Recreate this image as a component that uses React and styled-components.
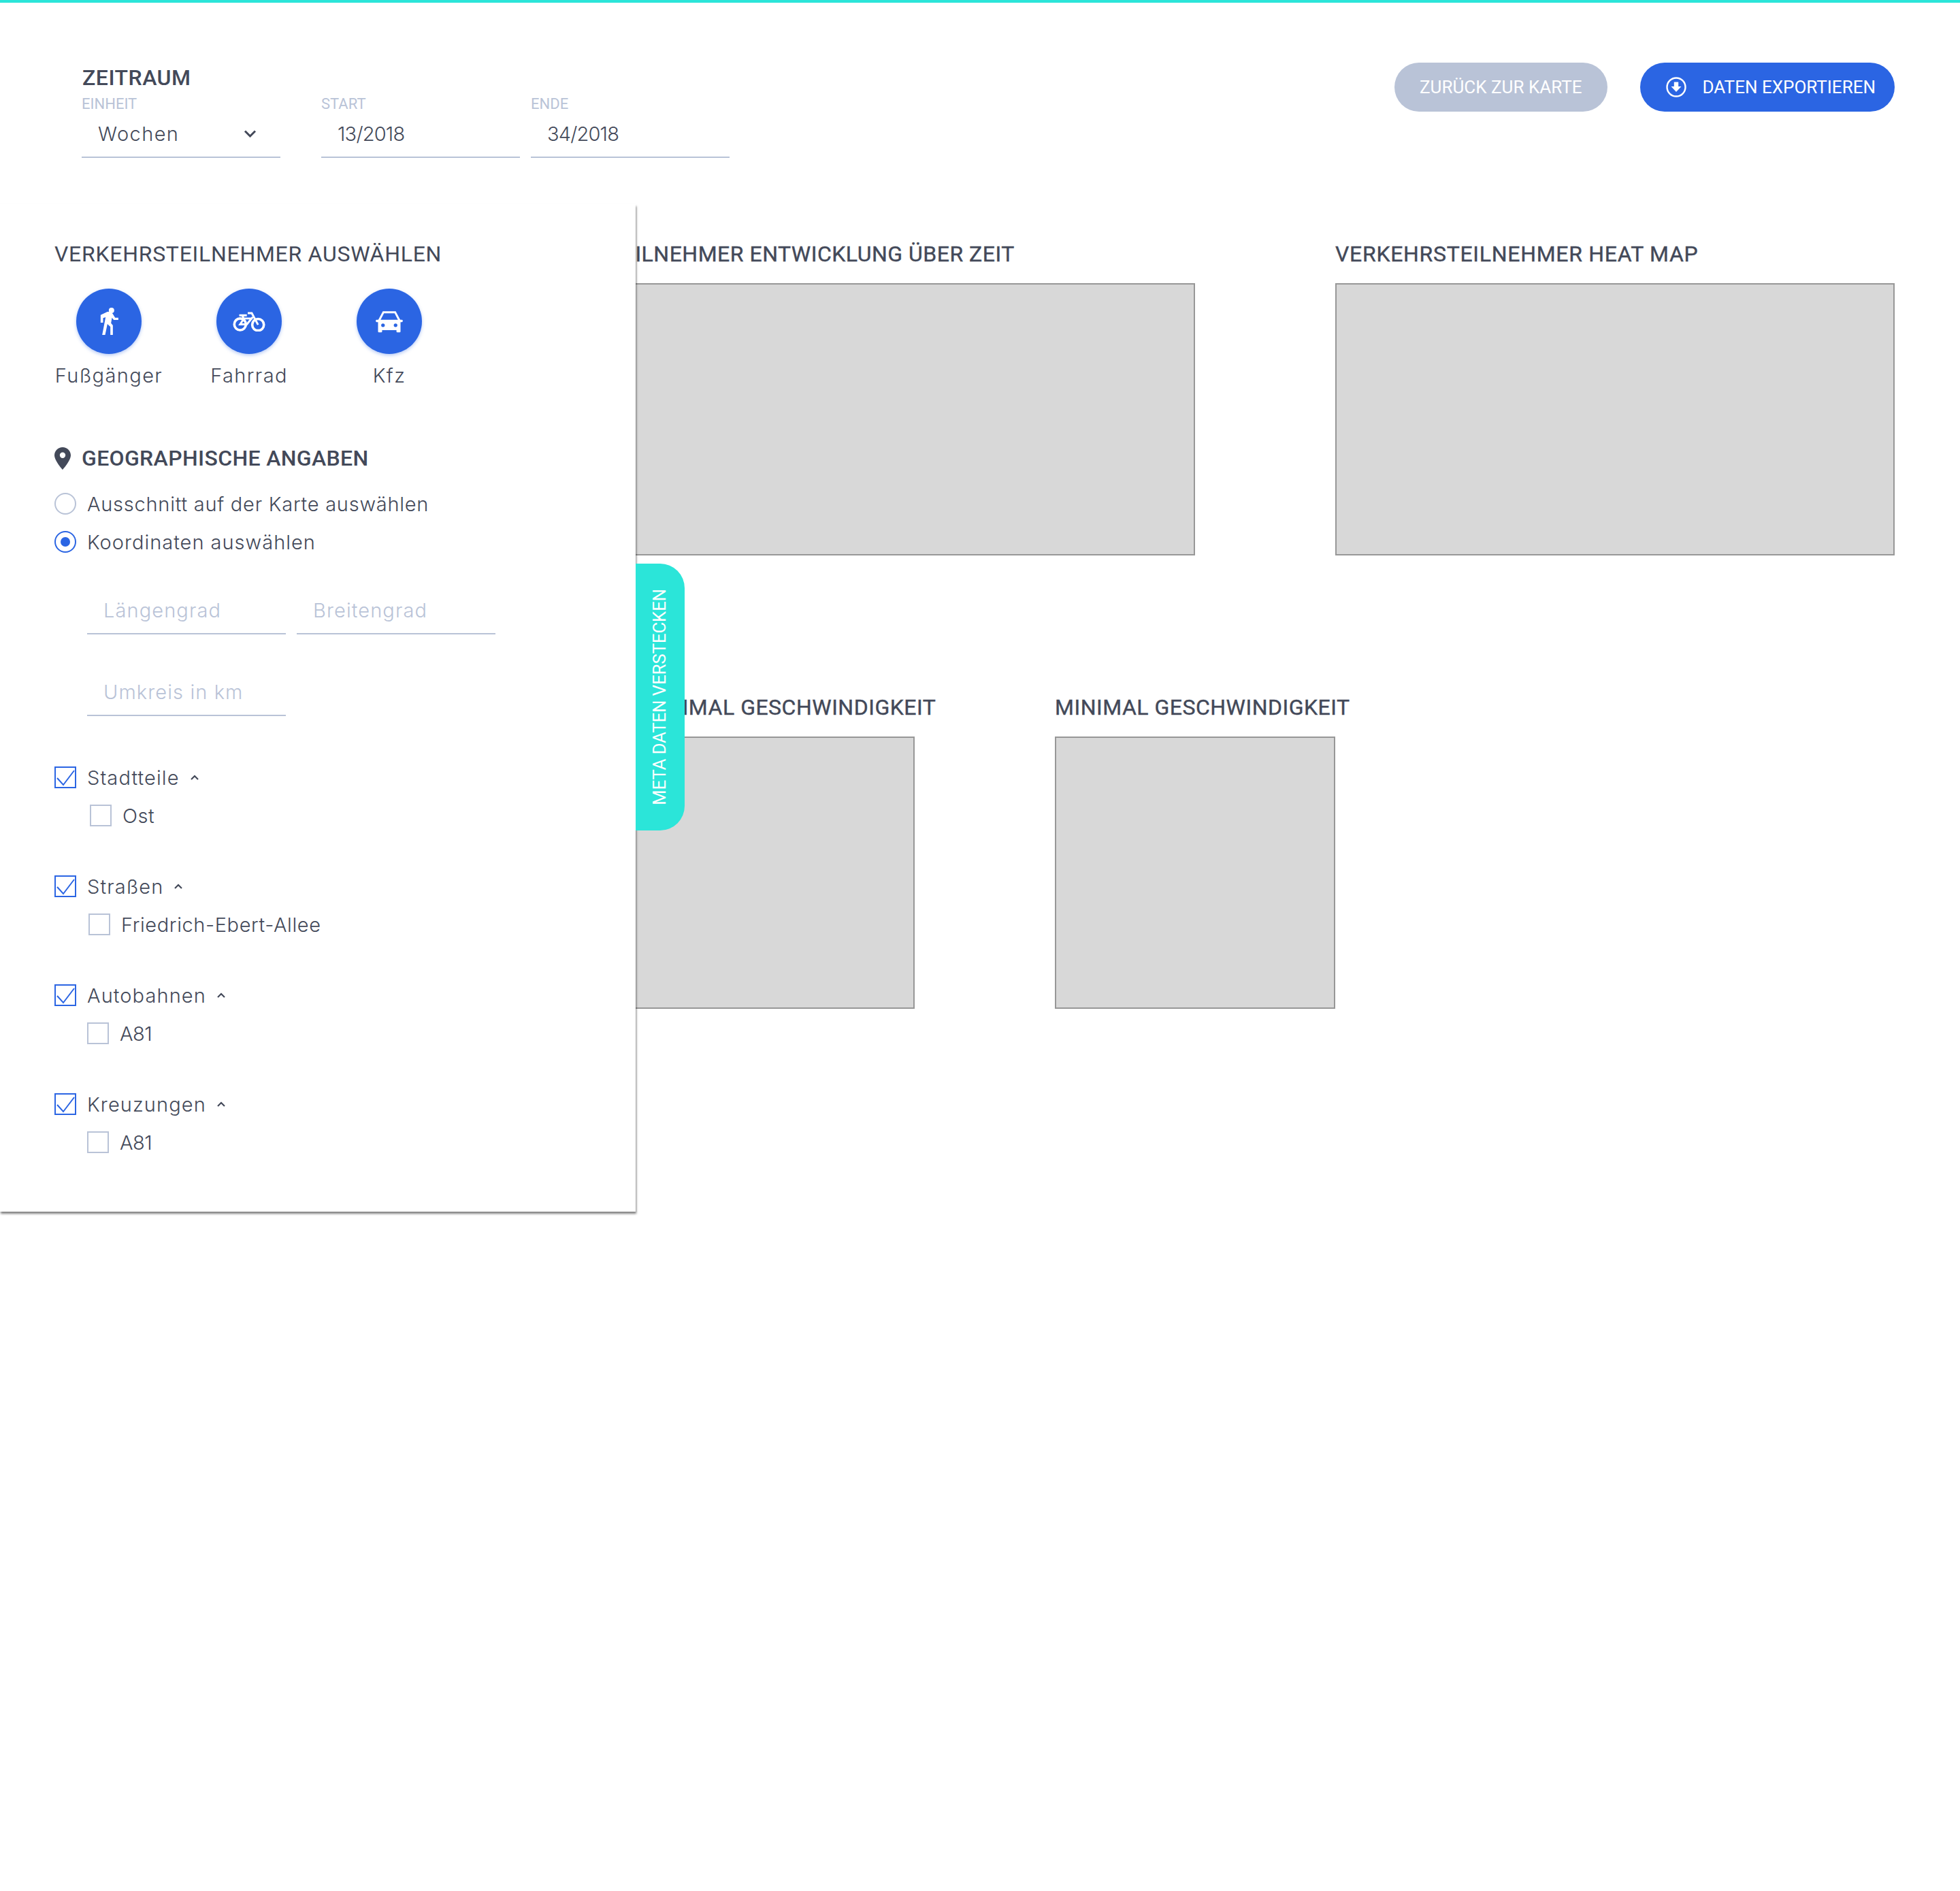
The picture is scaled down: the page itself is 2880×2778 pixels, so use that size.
import React from "react";
import styled, { createGlobalStyle } from "styled-components";

const BLUE = "#2b65e3";
const TEAL = "#2be5d9";
const GREY = "#b9c3d7";
const INK = "#434959";
const BODY_FONT = `"Inter", "Liberation Sans", sans-serif`;
const HEAD_FONT = `"Roboto", "Liberation Sans", sans-serif`;

const GlobalStyle = createGlobalStyle`
  html, body {
    margin: 0;
    padding: 0;
    background: #fff;
  }
  * {
    box-sizing: border-box;
  }
`;

const WalkIcon = () => (
  <svg width="27" height="40" viewBox="0 0 80 120" fill="#fff">
    <circle cx="50" cy="12" r="12" />
    <path d="M2 32 L32 18 H48 L56 28 L66 44 H80 V54 H60 L52 44 L48 68 L56 78 V120 H45 V84 L32 72 L22 120 H9 L24 42 L13 46 V66 H2 Z" />
  </svg>
);

const BikeIcon = () => (
  <svg width="48" height="29" viewBox="0 0 144 88" fill="none" stroke="#fff" strokeWidth="11">
    <circle cx="32" cy="56" r="26" />
    <circle cx="112" cy="58" r="26" />
    <path d="M28 16 H62 M42 16 L48 32 L32 56 H62 L88 24 M66 6 H84 L112 58 M46 30 H88" strokeWidth="9" />
  </svg>
);

const CarIcon = () => (
  <svg width="40" height="33" viewBox="0 0 120 100">
    <path d="M12 50 L34 8 H86 L108 50" fill="none" stroke="#fff" strokeWidth="9" />
    <rect x="0" y="42" width="120" height="10" rx="4" fill="#fff" />
    <path d="M10 48 H110 V94 Q110 98 106 98 H96 Q92 98 92 94 V88 H28 V94 Q28 98 24 98 H14 Q10 98 10 94 Z" fill="#fff" />
    <circle cx="32" cy="66" r="8" fill={BLUE} />
    <circle cx="88" cy="66" r="8" fill={BLUE} />
  </svg>
);

const ExportIcon = () => (
  <svg width="30" height="30" viewBox="0 0 30 30" fill="none">
    <circle cx="15" cy="15" r="13.5" stroke="#fff" strokeWidth="2.4" />
    <path d="M11.8 7.5 H18.2 V14 H22.5 L15 22 L7.5 14 H11.8 Z" fill="#fff" />
  </svg>
);

const PinIcon = () => (
  <svg width="24" height="33" viewBox="0 0 24 33">
    <path
      fillRule="evenodd"
      d="M12 0 C5.4 0 0 5.2 0 11.8 C0 20 12 33 12 33 C12 33 24 20 24 11.8 C24 5.2 18.6 0 12 0 Z M12 16 A4.2 4.2 0 1 1 12 7.6 A4.2 4.2 0 0 1 12 16 Z"
      fill={INK}
    />
  </svg>
);

const ChevronUp = () => (
  <svg width="12" height="8" viewBox="0 0 12 8" fill="none" stroke={INK} strokeWidth="2.2">
    <path d="M1 7 L6 2 L11 7" />
  </svg>
);

const ChevronDown = () => (
  <svg width="19" height="11" viewBox="0 0 19 11" fill="none" stroke={INK} strokeWidth="3">
    <path d="M2 1.5 L9.5 9 L17 1.5" />
  </svg>
);

const Tick = () => (
  <svg width="28" height="28" viewBox="0 0 28 28" fill="none" stroke={BLUE} strokeWidth="2">
    <path d="M2 15 L11 25 L27 4" />
  </svg>
);

const Page = styled.div`
  position: relative;
  width: 2880px;
  min-height: 2778px;
  background: #fff;
  border-top: 4px solid ${TEAL};
  font-family: ${BODY_FONT};
  color: ${INK};
`;

const Header = styled.header`
  display: flex;
  justify-content: space-between;
  align-items: flex-start;
  height: 296px;
  padding: 88px 96px 0 120px;
`;

const Period = styled.div`
  padding-top: 3px;
`;

const PeriodTitle = styled.h2`
  margin: 0 0 7px 1px;
  font: 500 32px/38px ${HEAD_FONT};
  letter-spacing: 0.5px;
  color: ${INK};
`;

const Fields = styled.div`
  display: flex;
`;

const Field = styled.div`
  width: 292px;
  margin-right: ${(p) => p.$gap || 0}px;
`;

const FieldLabel = styled.div`
  font: 400 22px/26px ${HEAD_FONT};
  color: ${GREY};
`;

const FieldValue = styled.div`
  display: flex;
  justify-content: space-between;
  align-items: center;
  height: 66px;
  padding: 0 35px 4px 24px;
  border-bottom: 2px solid ${GREY};
  font-size: 29px;
  font-weight: 300;
  letter-spacing: ${(p) => p.$ls}px;
`;

const Actions = styled.div`
  display: flex;
  gap: 48px;
`;

const PillButton = styled.button`
  display: flex;
  align-items: center;
  gap: 24px;
  height: 72px;
  padding: ${(p) => (p.$primary ? "0 28px 0 38px" : "0 37px")};
  border: none;
  border-radius: 36px;
  background: ${(p) => (p.$primary ? BLUE : GREY)};
  color: #fff;
  font: 400 26px/1 ${HEAD_FONT};
  cursor: pointer;
`;

const Content = styled.main`
  display: flex;
  flex-direction: column;
  gap: 204px;
  padding: 54px 96px 0 0;
`;

const ChartRow = styled.section`
  display: flex;
  gap: 206px;
  justify-content: ${(p) => (p.$right ? "flex-end" : "flex-start")};
  padding-left: ${(p) => (p.$right ? 0 : 932)}px;
`;

const ChartCard = styled.article`
  width: ${(p) => p.$width}px;
`;

const ChartTitle = styled.h3`
  margin: 0 0 24px;
  font: 400 32px/38px ${HEAD_FONT};
  letter-spacing: ${(p) => p.$ls}px;
  -webkit-text-stroke: 0.4px ${INK};
  color: ${INK};
  white-space: nowrap;
`;

const ChartBox = styled.div`
  height: 400px;
  background: #d8d8d8;
  border: 2px solid #979797;
`;

const Drawer = styled.aside`
  position: absolute;
  top: 296px;
  left: 0;
  width: 934px;
  height: 1480px;
  padding: 54px 0 0 80px;
  background: #fff;
  box-shadow: 1px 3px 3px rgba(0, 0, 0, 0.5);
`;

const DrawerTab = styled.button`
  position: absolute;
  top: 528px;
  left: 100%;
  display: flex;
  align-items: center;
  justify-content: center;
  width: 72px;
  height: 392px;
  padding: 0;
  border: none;
  border-radius: 0 36px 36px 0;
  background: ${TEAL};
  color: #fff;
  font: 400 25.6px/1 ${HEAD_FONT};
  cursor: pointer;
  & span {
    writing-mode: vertical-rl;
    transform: rotate(180deg);
    white-space: nowrap;
  }
`;

const DrawerTitle = styled.h3`
  display: flex;
  align-items: center;
  gap: 16px;
  margin: ${(p) => p.$top || 0}px 0 0;
  font: ${(p) => p.$weight || 400} 32px/38px ${HEAD_FONT};
  letter-spacing: ${(p) => p.$ls}px;
  color: ${INK};
`;

const Modes = styled.div`
  display: flex;
  margin-top: 32px;
`;

const Mode = styled.div`
  display: flex;
  flex-direction: column;
  align-items: center;
  width: 160px;
  margin-right: 46px;
`;

const ModeButton = styled.button`
  display: flex;
  align-items: center;
  justify-content: center;
  width: 96px;
  height: 96px;
  padding: 0;
  border: none;
  border-radius: 50%;
  background: ${BLUE};
  box-shadow: 0 2px 5px rgba(43, 101, 227, 0.35);
  cursor: pointer;
`;

const ModeLabel = styled.span`
  margin-top: 14px;
  font-size: 29px;
  line-height: 36px;
  font-weight: 300;
  letter-spacing: 1.4px;
  white-space: nowrap;
`;

const RadioList = styled.div`
  display: flex;
  flex-direction: column;
  gap: 24px;
  margin-top: 32px;
`;

const OptionRow = styled.label`
  display: flex;
  align-items: center;
  gap: 16px;
  margin-left: ${(p) => p.$indent || 0}px;
  height: 32px;
  font-size: 29px;
  font-weight: 300;
  letter-spacing: ${(p) => (p.$ls === undefined ? 1.1 : p.$ls)}px;
  white-space: nowrap;
`;

const Radio = styled.span`
  display: flex;
  align-items: center;
  justify-content: center;
  flex: none;
  width: 32px;
  height: 32px;
  border: 2px solid ${(p) => (p.$on ? BLUE : GREY)};
  border-radius: 50%;
  &::after {
    content: "";
    display: ${(p) => (p.$on ? "block" : "none")};
    width: 14px;
    height: 14px;
    border-radius: 50%;
    background: ${BLUE};
  }
`;

const CoordRow = styled.div`
  display: flex;
  gap: 16px;
  margin: ${(p) => p.$top}px 0 0 48px;
`;

const CoordInput = styled.div`
  display: flex;
  align-items: center;
  width: 292px;
  height: 62px;
  padding: 0 24px 8px;
  border-bottom: 2px solid ${GREY};
  color: ${GREY};
  font-size: 29px;
  font-weight: 300;
  letter-spacing: 1.1px;
  white-space: nowrap;
`;

const Groups = styled.div`
  display: flex;
  flex-direction: column;
  gap: 72px;
  margin-top: 74px;
`;

const Group = styled.div`
  display: flex;
  flex-direction: column;
  gap: 24px;
`;

const Check = styled.span`
  display: flex;
  align-items: center;
  justify-content: center;
  flex: none;
  width: 32px;
  height: 32px;
  border: 2px solid ${(p) => (p.$on ? BLUE : GREY)};
`;

const GroupChevron = styled.span`
  display: flex;
`;

const modes = [
  { label: "Fußgänger", icon: <WalkIcon /> },
  { label: "Fahrrad", icon: <BikeIcon /> },
  { label: "Kfz", icon: <CarIcon /> },
];

const groups = [
  { name: "Stadtteile", item: "Ost", indent: 52, ls: 0.5 },
  { name: "Straßen", item: "Friedrich-Ebert-Allee", indent: 50, ls: 0.6 },
  { name: "Autobahnen", item: "A81", indent: 48, ls: -0.5 },
  { name: "Kreuzungen", item: "A81", indent: 48, ls: -0.5 },
];

const App = () => {
  return (
    <Page>
      <GlobalStyle />
      <Header>
        <Period>
          <PeriodTitle>ZEITRAUM</PeriodTitle>
          <Fields>
            <Field $gap={60}>
              <FieldLabel>EINHEIT</FieldLabel>
              <FieldValue $ls={1.4}>
                Wochen
                <ChevronDown />
              </FieldValue>
            </Field>
            <Field $gap={16}>
              <FieldLabel>START</FieldLabel>
              <FieldValue $ls={-0.8}>13/2018</FieldValue>
            </Field>
            <Field>
              <FieldLabel>ENDE</FieldLabel>
              <FieldValue $ls={-0.8}>34/2018</FieldValue>
            </Field>
          </Fields>
        </Period>
        <Actions>
          <PillButton>ZURÜCK ZUR KARTE</PillButton>
          <PillButton $primary>
            <ExportIcon />
            DATEN EXPORTIEREN
          </PillButton>
        </Actions>
      </Header>

      <Content>
        <ChartRow $right>
          <ChartCard $width={1023}>
            <ChartTitle $ls={0.5}>VERKEHRSTEILNEHMER ENTWICKLUNG ÜBER ZEIT</ChartTitle>
            <ChartBox />
          </ChartCard>
          <ChartCard $width={822}>
            <ChartTitle $ls={0.7}>VERKEHRSTEILNEHMER HEAT MAP</ChartTitle>
            <ChartBox />
          </ChartCard>
        </ChartRow>
        <ChartRow>
          <ChartCard $width={412}>
            <ChartTitle $ls={0.5}>MAXIMAL GESCHWINDIGKEIT</ChartTitle>
            <ChartBox />
          </ChartCard>
          <ChartCard $width={412}>
            <ChartTitle $ls={0.5}>MINIMAL GESCHWINDIGKEIT</ChartTitle>
            <ChartBox />
          </ChartCard>
        </ChartRow>
      </Content>

      <Drawer>
        <DrawerTab>
          <span>META DATEN VERSTECKEN</span>
        </DrawerTab>
        <DrawerTitle $ls={0.72}>VERKEHRSTEILNEHMER AUSWÄHLEN</DrawerTitle>
        <Modes>
          {modes.map((mode) => (
            <Mode key={mode.label}>
              <ModeButton>{mode.icon}</ModeButton>
              <ModeLabel>{mode.label}</ModeLabel>
            </Mode>
          ))}
        </Modes>

        <DrawerTitle $top={84} $weight={500} $ls={0.35}>
          <PinIcon />
          GEOGRAPHISCHE ANGABEN
        </DrawerTitle>
        <RadioList>
          <OptionRow $ls={0.75}>
            <Radio />
            Ausschnitt auf der Karte auswählen
          </OptionRow>
          <OptionRow $ls={1}>
            <Radio $on />
            Koordinaten auswählen
          </OptionRow>
        </RadioList>
        <CoordRow $top={58}>
          <CoordInput>Längengrad</CoordInput>
          <CoordInput>Breitengrad</CoordInput>
        </CoordRow>
        <CoordRow $top={58}>
          <CoordInput>Umkreis in km</CoordInput>
        </CoordRow>

        <Groups>
          {groups.map((group) => (
            <Group key={group.name}>
              <OptionRow>
                <Check $on>
                  <Tick />
                </Check>
                {group.name}
                <GroupChevron>
                  <ChevronUp />
                </GroupChevron>
              </OptionRow>
              <OptionRow $indent={group.indent} $ls={group.ls}>
                <Check />
                {group.item}
              </OptionRow>
            </Group>
          ))}
        </Groups>
      </Drawer>
    </Page>
  );
};

export default App;
